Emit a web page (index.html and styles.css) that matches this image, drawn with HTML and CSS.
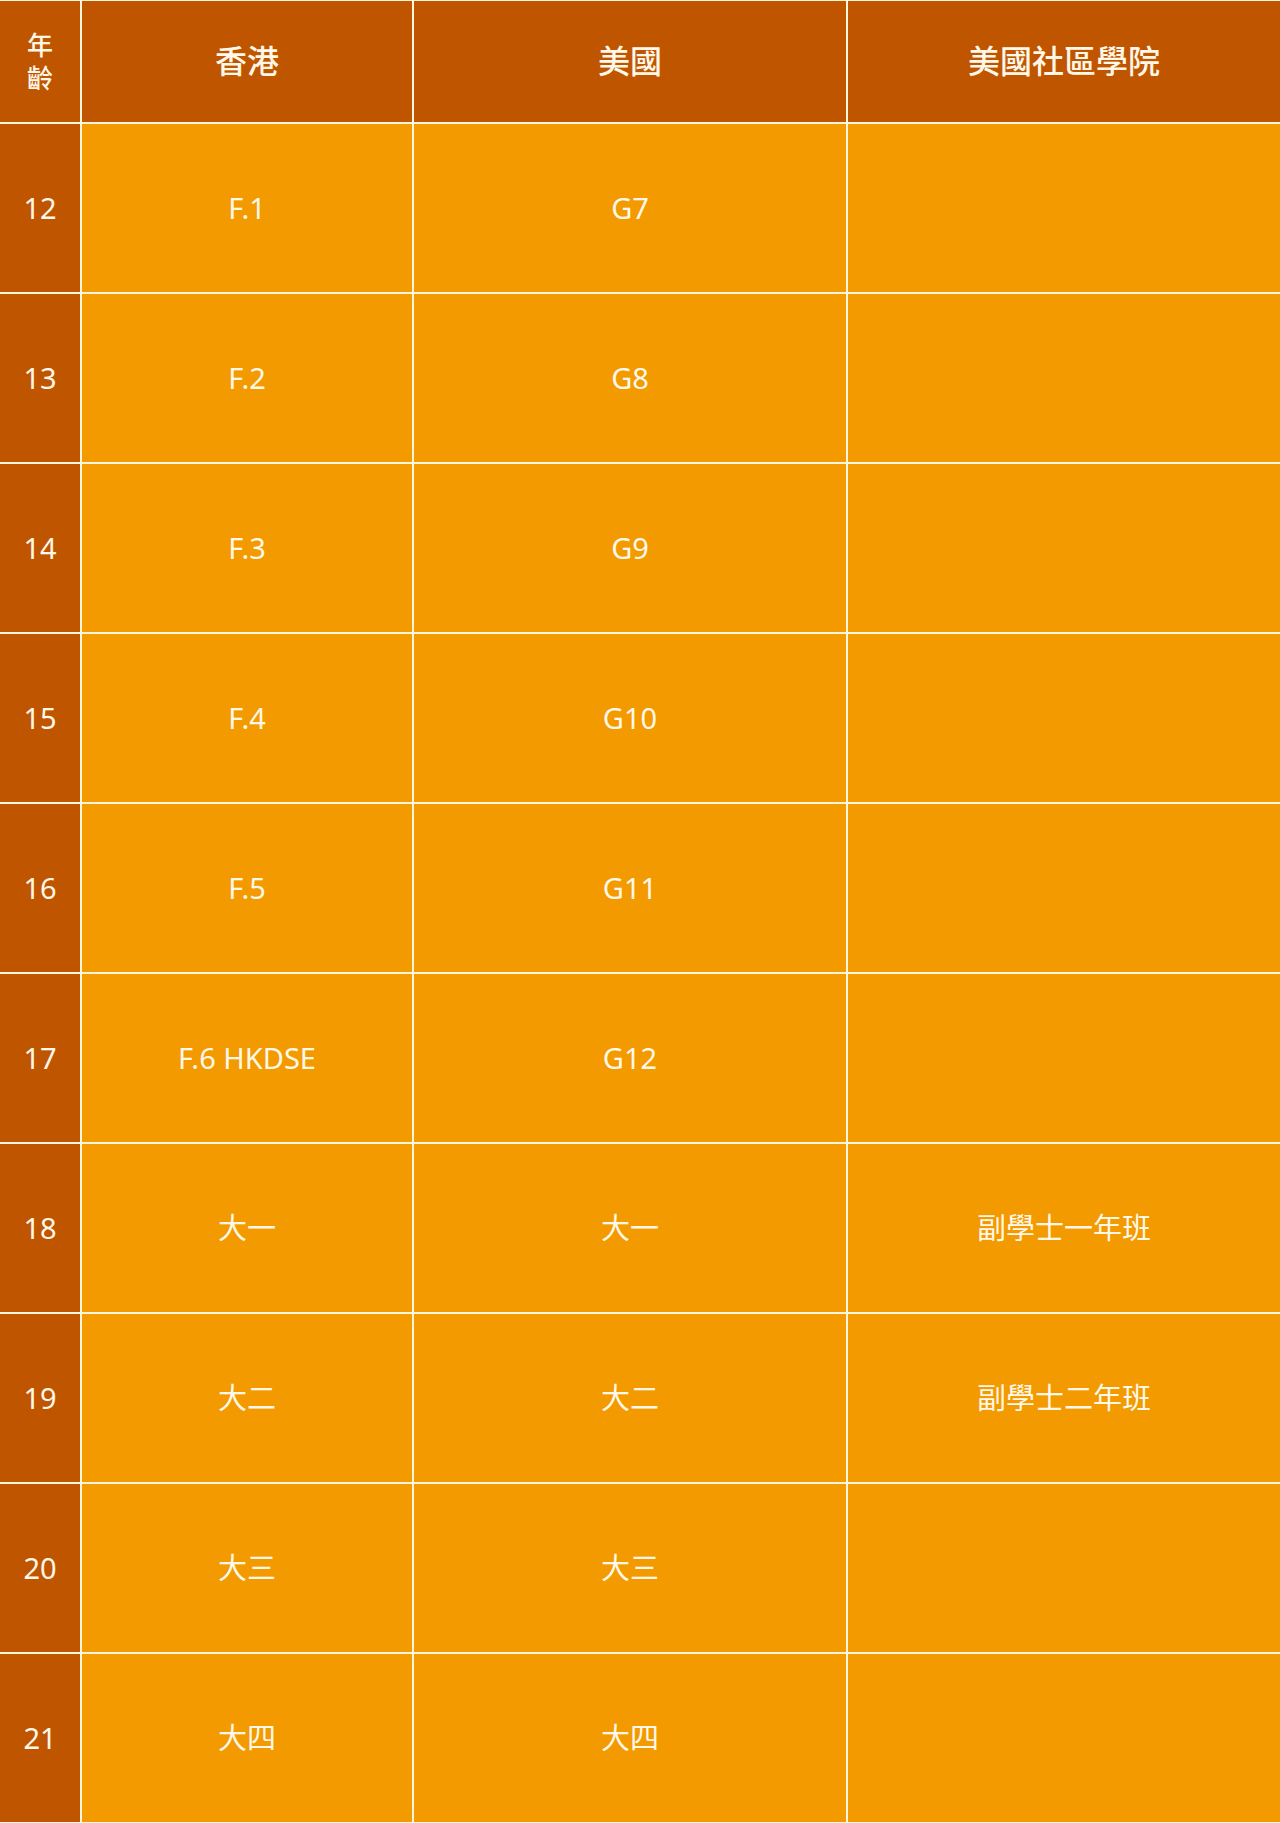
FILE: index.html
```html
<!DOCTYPE html>
<html lang="zh-Hant">
<head>
<meta charset="utf-8">
<title>學制對照表</title>
<link rel="stylesheet" href="styles.css">
</head>
<body>
<div class="grid">
  <div class="cell head age-head">年<br>齡</div>
  <div class="cell head">香港</div>
  <div class="cell head">美國</div>
  <div class="cell head">美國社區學院</div>

  <div class="cell age">12</div><div class="cell">F.1</div><div class="cell">G7</div><div class="cell"></div>
  <div class="cell age">13</div><div class="cell">F.2</div><div class="cell">G8</div><div class="cell"></div>
  <div class="cell age">14</div><div class="cell">F.3</div><div class="cell">G9</div><div class="cell"></div>
  <div class="cell age">15</div><div class="cell">F.4</div><div class="cell">G10</div><div class="cell"></div>
  <div class="cell age">16</div><div class="cell">F.5</div><div class="cell">G11</div><div class="cell"></div>
  <div class="cell age">17</div><div class="cell">F.6 HKDSE</div><div class="cell">G12</div><div class="cell"></div>
  <div class="cell age">18</div><div class="cell">大一</div><div class="cell">大一</div><div class="cell">副學士一年班</div>
  <div class="cell age">19</div><div class="cell">大二</div><div class="cell">大二</div><div class="cell">副學士二年班</div>
  <div class="cell age">20</div><div class="cell">大三</div><div class="cell">大三</div><div class="cell"></div>
  <div class="cell age">21</div><div class="cell">大四</div><div class="cell">大四</div><div class="cell"></div>
</div>
</body>
</html>
```
FILE: styles.css
```css
html, body {
  margin: 0;
  padding: 0;
  background: #fff6dc;
}

.grid {
  display: grid;
  grid-template-columns: 80px 330px 432px 432px;
  grid-template-rows: 121px repeat(10, 168px);
  gap: 2px;
  padding-top: 1px;
  background: #fff6dc;
  width: 1280px;
  font-family: "Noto Sans", "Noto Sans CJK TC", sans-serif;
}

.cell {
  display: flex;
  align-items: center;
  justify-content: center;
  text-align: center;
  background: #f29a00;
  color: #fff8e8;
  font-size: 29px;
  line-height: 1.2;
}

.head {
  background: #c05500;
  font-size: 32px;
  font-weight: 500;
}

.age-head {
  font-size: 26px;
  line-height: 33px;
  font-weight: 500;
}

.age {
  background: #c05500;
}
```
